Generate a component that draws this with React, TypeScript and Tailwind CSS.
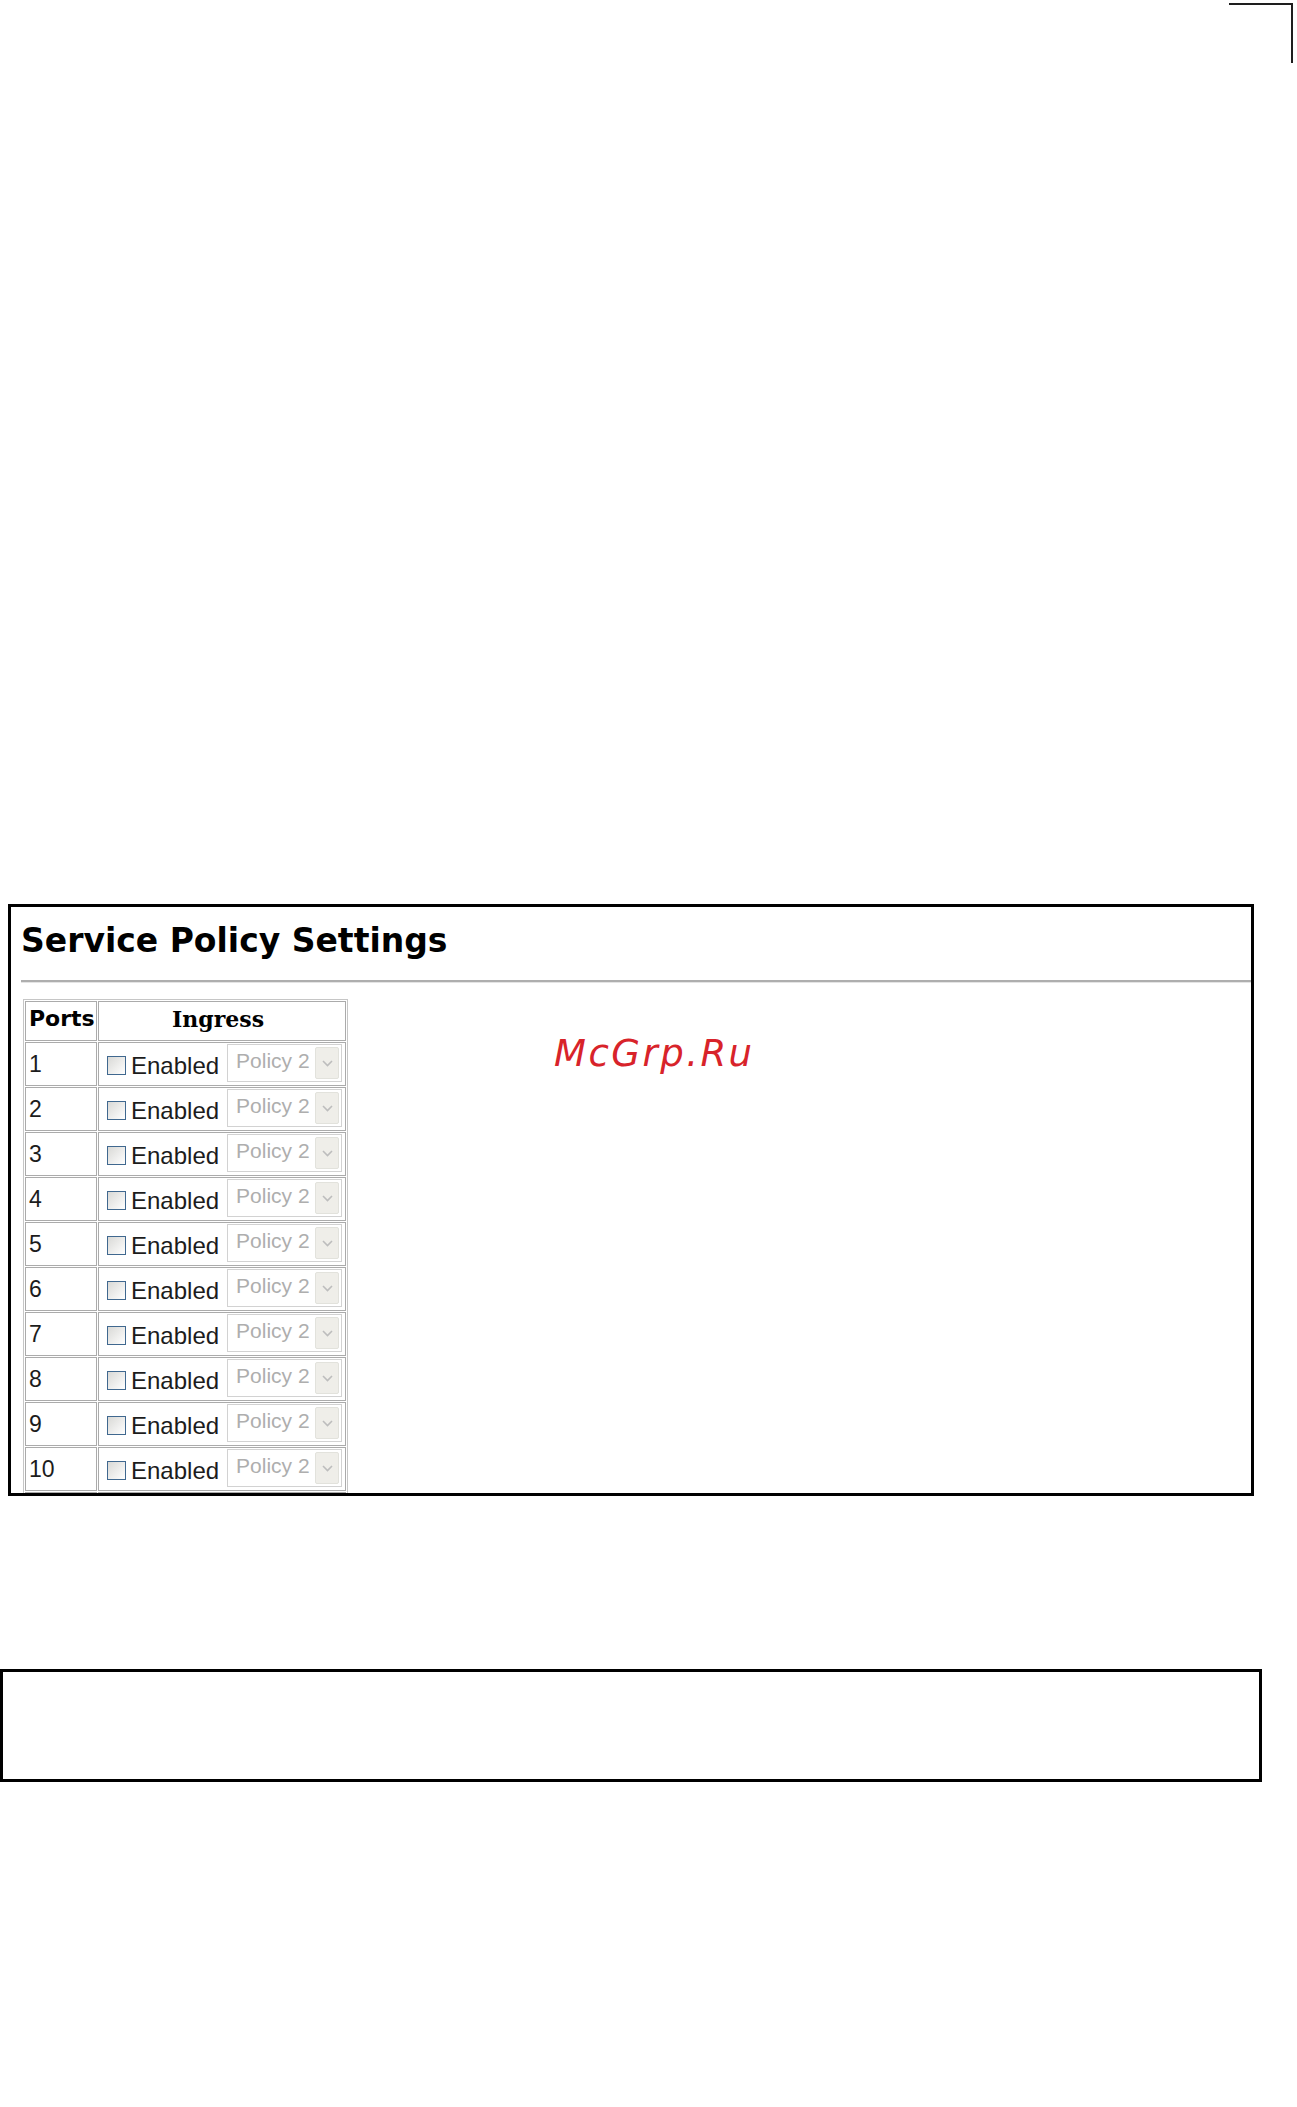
const ports = Array.from({ length: 10 }, (_, i) => i + 1);

function PolicySelect() {
  return (
    <div className="flex h-[38px] w-[115px] items-stretch border border-[#d2d2d2] bg-white p-[2px]">
      <div className="flex flex-1 items-start pl-[6px] pt-[1px] font-['Liberation_Sans',sans-serif] text-[21px] leading-[26px] text-[#aeaeae]">
        Policy 2
      </div>
      <div className="flex w-[24px] items-center justify-center rounded-[2px] border border-[#e2e2dc] bg-[#efeee9]">
        <svg width="11" height="7" viewBox="0 0 11 7" fill="none">
          <polyline points="1,1 5.5,5.5 10,1" stroke="#bdbdbd" strokeWidth="1.6" />
        </svg>
      </div>
    </div>
  );
}

function PortRow({ port }: { port: number }) {
  return (
    <tr>
      <td className="h-[44px] border border-[#ababab] p-0 align-top">
        <div className="h-[42px] pl-[3px] pt-[8px] font-['Liberation_Sans',sans-serif] text-[23px] leading-[26px] text-[#1c1c1c]">
          {port}
        </div>
      </td>
      <td className="h-[44px] border border-[#ababab] p-0 align-top">
        <div className="flex h-[42px] items-start pl-[8px]">
          <span className="mt-[13px] block h-[19px] w-[19px] border border-[#40688f] bg-gradient-to-br from-[#d9d9d6] to-white" />
          <span className="ml-[5px] mt-[10px] font-['Liberation_Sans',sans-serif] text-[24px] leading-[26px] text-[#1c1c1c]">
            Enabled
          </span>
          <div className="ml-[8px] mt-[1px]">
            <PolicySelect />
          </div>
        </div>
      </td>
    </tr>
  );
}

export default function App() {
  return (
    <div className="h-[2107px] w-[1297px] bg-white">
      <div className="flex justify-end pr-[4px] pt-[3px]">
        <div className="h-[60px] w-[64px] border-r-2 border-t-2 border-[#1e1e1e]" />
      </div>

      <div className="relative ml-[8px] mt-[841px] h-[592px] w-[1246px] overflow-hidden border-[3px] border-black bg-white">
        <div className="pl-[10px] pt-[14px]">
          <h1 className="font-['DejaVu_Sans',sans-serif] text-[33px] font-bold leading-[40px] text-black">
            Service Policy Settings
          </h1>
        </div>
        <div className="ml-[10px] mt-[19px] border-t-2 border-[#aeaeae]" />
        <div className="ml-[10px] h-[1px] bg-[#e4e4e4]" />

        <table className="ml-[12px] mt-[16px] w-[325px] table-fixed border-separate border-spacing-[1px] border border-[#c6c6c6]">
          <thead>
            <tr>
              <th className="h-[40px] w-[72px] border border-[#ababab] p-0 align-top">
                <div className="pl-[3px] pt-[4px] text-left font-['DejaVu_Sans',sans-serif] text-[22px] font-bold leading-[26px] text-black">
                  Ports
                </div>
              </th>
              <th className="h-[40px] border border-[#ababab] p-0 align-top">
                <div className="pr-[8px] pt-[4px] text-center font-['DejaVu_Serif',serif] text-[22px] font-bold leading-[26px] text-black">
                  Ingress
                </div>
              </th>
            </tr>
          </thead>
          <tbody>
            {ports.map((p) => (
              <PortRow key={p} port={p} />
            ))}
            <tr>
              <td className="h-[44px] border border-[#ababab] p-0" />
              <td className="h-[44px] border border-[#ababab] p-0" />
            </tr>
          </tbody>
        </table>

        <div className="pointer-events-none absolute left-[543px] top-[128px] font-['DejaVu_Sans',sans-serif] text-[37px] italic leading-[37px] tracking-[2.5px] text-[#d8232a]">
          McGrp.Ru
        </div>
      </div>

      <div className="mt-[173px] h-[113px] w-[1262px] border-[3px] border-black" />
    </div>
  );
}
